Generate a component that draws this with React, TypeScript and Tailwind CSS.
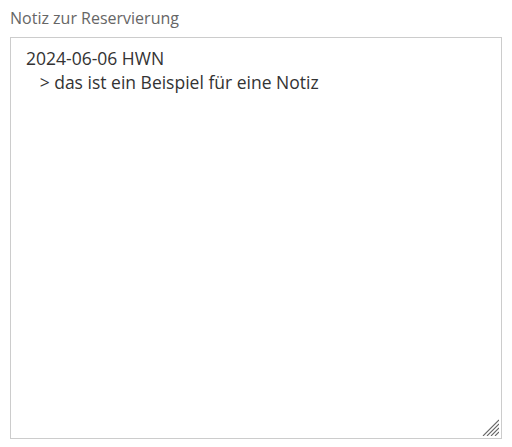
import React from "react";

const App: React.FC = () => {
    return (
        <div className="w-[512px] h-[447px] bg-white px-[10px] pt-[7px]" style={{ fontFamily: '"Open Sans", sans-serif' }}>
            <label className="block text-[16px] leading-[22px] text-[#666] mb-[8px]">
                Notiz zur Reservierung
            </label>
            <div className="relative w-[492px] h-[402px]">
                <textarea
                    className="block w-full h-full border border-[#ccc] px-[15px] py-[8px] text-[17.5px] leading-[24px] text-[#333] outline-none resize-none"
                    defaultValue={"2024-06-06 HWN\n   > das ist ein Beispiel für eine Notiz"}
                />
                {/* resize grip */}
                <svg className="absolute right-[3px] bottom-[3px] w-[17px] h-[17px]" viewBox="0 0 17 17" stroke="#666" strokeWidth="1.1">
                    <line x1="1" y1="17" x2="17" y2="1" />
                    <line x1="5" y1="17" x2="17" y2="5" />
                    <line x1="9" y1="17" x2="17" y2="9" />
                    <line x1="13" y1="17" x2="17" y2="13" />
                </svg>
            </div>
        </div>
    );
};

export default App;
